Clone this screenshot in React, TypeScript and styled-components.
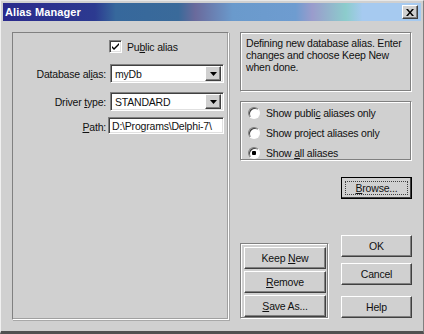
import React from "react";
import styled, { createGlobalStyle } from "styled-components";

const GlobalStyle = createGlobalStyle`
  html, body {
    margin: 0;
    padding: 0;
    background: #d0d0d0;
  }
  body {
    font-family: "Liberation Sans", Arial, sans-serif;
    font-size: 10.5px;
    letter-spacing: -0.2px;
    color: #111;
  }
`;

const raised = `
  border: 1px solid;
  border-color: #ffffff #404040 #404040 #ffffff;
  box-shadow: inset -1px -1px 0 #808080;
`;

const sunken = `
  border: 1px solid;
  border-color: #808080 #ffffff #ffffff #808080;
  box-shadow: inset 1px 1px 0 #404040, inset -1px -1px 0 #e0e0e0;
`;

const Arrow = () => (
  <svg width="7" height="4" viewBox="0 0 7 4">
    <path d="M0 0h7L3.5 4z" fill="#000" />
  </svg>
);

export default function App() {
  return (
    <>
      <GlobalStyle />
      <Window>
        <TitleBar>
          <Title>Alias Manager</Title>
          <CloseButton>
            <svg width="8" height="7" viewBox="0 0 8 7">
              <path d="M0 0h2l2 2.5L6 0h2L5 3.5 8 7H6L4 4.5 2 7H0l3-3.5z" fill="#000" />
            </svg>
          </CloseButton>
        </TitleBar>
        <Body>
          <LeftPanel>
            <CheckRow>
              <CheckBox>
                <svg width="9" height="9" viewBox="0 0 9 9">
                  <path d="M1 4l2 2 5-5v2L3 8 1 6z" fill="#000" />
                </svg>
              </CheckBox>
              <span>
                Pu<u>b</u>lic alias
              </span>
            </CheckRow>
            <FieldGrid>
              <Label>
                Database al<u>i</u>as:
              </Label>
              <Combo>
                <FieldText>myDb</FieldText>
                <DropButton>
                  <Arrow />
                </DropButton>
              </Combo>
              <Label>
                Driver <u>t</u>ype:
              </Label>
              <Combo>
                <FieldText>STANDARD</FieldText>
                <DropButton>
                  <Arrow />
                </DropButton>
              </Combo>
              <Label>
                <u>P</u>ath:
              </Label>
              <Edit>D:\Programs\Delphi-7\</Edit>
            </FieldGrid>
          </LeftPanel>
          <RightColumn>
            <InfoBox>
              Defining new database alias. Enter changes and choose Keep New
              when done.
            </InfoBox>
            <RadioGroup>
              <RadioRow>
                <Radio />
                <span>
                  Show publi<u>c</u> aliases only
                </span>
              </RadioRow>
              <RadioRow>
                <Radio />
                <span>
                  Show pro<u>j</u>ect aliases only
                </span>
              </RadioRow>
              <RadioRow>
                <Radio $checked />
                <span>
                  Show <u>a</u>ll aliases
                </span>
              </RadioRow>
            </RadioGroup>
            <BrowseRow>
              <Button $focused>
                <span>
                  <u>B</u>rowse...
                </span>
              </Button>
            </BrowseRow>
            <BottomRow>
              <ButtonGroup>
                <Button $wide>
                  <span>
                    Keep <u>N</u>ew
                  </span>
                </Button>
                <Button $wide>
                  <span>
                    <u>R</u>emove
                  </span>
                </Button>
                <Button $wide>
                  <span>
                    <u>S</u>ave As...
                  </span>
                </Button>
              </ButtonGroup>
              <DialogButtons>
                <Button>OK</Button>
                <Button>Cancel</Button>
                <Spacer />
                <Button>Help</Button>
              </DialogButtons>
            </BottomRow>
          </RightColumn>
        </Body>
      </Window>
    </>
  );
}

const Window = styled.div`
  width: 424px;
  height: 334px;
  box-sizing: border-box;
  background: #d0d0d0;
  border-left: 1px solid #f0f0f0;
  border-top: 1px solid #e8e8e8;
  border-bottom: 3px solid #505050;
  border-right: 1px solid #808080;
  padding: 2px 2px 0 2px;
  display: flex;
  flex-direction: column;
`;

const TitleBar = styled.div`
  height: 18px;
  display: flex;
  align-items: center;
  justify-content: space-between;
  padding: 0 3px 0 2px;
  background: linear-gradient(
    to right,
    #2a2a8c 0%,
    #2c3a90 22%,
    #36689c 27%,
    #3a6a9a 42%,
    #6a6a9c 46%,
    #6a9acc 55%,
    #6e9cd0 70%,
    #9a9ccc 74%,
    #8ccccc 82%,
    #a6caf0 86%,
    #a6caf0 100%
  );
`;

const Title = styled.span`
  color: #fff;
  font-weight: bold;
  font-size: 11px;
  letter-spacing: 0.1px;
`;

const CloseButton = styled.div`
  width: 14px;
  height: 12px;
  ${raised}
  background: #d0d0d0;
  display: flex;
  align-items: center;
  justify-content: center;
`;

const Body = styled.div`
  flex: 1;
  display: flex;
  gap: 11px;
  padding: 11px 9px 11px 9px;
`;

const LeftPanel = styled.div`
  width: 217px;
  height: 288px;
  box-sizing: border-box;
  border: 1px solid;
  border-color: #808080 #ffffff #ffffff #808080;
  box-shadow: inset -1px -1px 0 #a0a0a0, 1px 1px 0 #a8a8a8;
  padding: 6px 4px 0 0;
  display: flex;
  flex-direction: column;
`;

const CheckRow = styled.div`
  display: flex;
  align-items: center;
  gap: 5px;
  padding-left: 96px;
  height: 15px;
`;

const CheckBox = styled.div`
  width: 13px;
  height: 13px;
  box-sizing: border-box;
  ${sunken}
  background: #fff;
  display: flex;
  align-items: center;
  justify-content: center;
`;

const FieldGrid = styled.div`
  margin-top: 10px;
  display: grid;
  grid-template-columns: 93px 1fr;
  column-gap: 4px;
  row-gap: 9px;
  align-items: center;
`;

const Label = styled.label`
  text-align: right;
  white-space: nowrap;
`;

const Combo = styled.div`
  height: 19px;
  box-sizing: border-box;
  ${sunken}
  background: #fff;
  display: flex;
  align-items: center;
  padding: 2px;
`;

const FieldText = styled.span`
  flex: 1;
  padding-left: 2px;
`;

const DropButton = styled.div`
  width: 16px;
  height: 15px;
  box-sizing: border-box;
  ${raised}
  background: #d0d0d0;
  display: flex;
  align-items: center;
  justify-content: center;
`;

const Edit = styled.div`
  height: 17px;
  box-sizing: border-box;
  ${sunken}
  background: #fff;
  display: flex;
  align-items: center;
  padding-left: 3px;
  margin-left: -2px;
  margin-top: -3px;
  white-space: nowrap;
  overflow: hidden;
`;

const RightColumn = styled.div`
  width: 172px;
  display: flex;
  flex-direction: column;
`;

const GroupFrame = styled.div`
  box-sizing: border-box;
  border: 1px solid;
  border-color: #808080 #ffffff #ffffff #808080;
  box-shadow: inset -1px -1px 0 #808080, inset 1px 1px 0 #ffffff;
`;

const InfoBox = styled(GroupFrame)`
  height: 60px;
  padding: 4px 5px;
  line-height: 12px;
`;

const RadioGroup = styled(GroupFrame)`
  margin-top: 9px;
  height: 60px;
  padding: 4px 0 0 7px;
  display: flex;
  flex-direction: column;
  gap: 7px;
`;

const RadioRow = styled.div`
  display: flex;
  align-items: center;
  gap: 6px;
  height: 13px;
`;

const Radio = styled.div<{ $checked?: boolean }>`
  width: 12px;
  height: 12px;
  box-sizing: border-box;
  border-radius: 50%;
  border: 1px solid;
  border-color: #808080 #ffffff #ffffff #808080;
  box-shadow: inset 1px 1px 0 #404040;
  background: radial-gradient(
    circle,
    ${({ $checked }) => ($checked ? "#000 0 2px, #fff 2.5px" : "#fff 0")}
  );
`;

const BrowseRow = styled.div`
  margin-top: 16px;
  display: flex;
  justify-content: flex-end;
`;

const Button = styled.div<{ $focused?: boolean; $wide?: boolean }>`
  width: ${({ $wide }) => ($wide ? "82px" : "71px")};
  height: 22px;
  box-sizing: border-box;
  ${raised}
  background: #d0d0d0;
  display: flex;
  align-items: center;
  justify-content: center;
  position: relative;
  ${({ $focused }) =>
    $focused &&
    `
    border-color: #fff #000 #000 #fff;
    box-shadow: inset -1px -1px 0 #404040;
    outline: 1px solid #000;
    outline-offset: -1px;
    &::after {
      content: "";
      position: absolute;
      inset: 3px;
      border: 1px dotted #404040;
    }
  `}
`;

const BottomRow = styled.div`
  margin-top: 36px;
  display: flex;
  justify-content: space-between;
  align-items: flex-start;
`;

const ButtonGroup = styled(GroupFrame)`
  margin-top: 8px;
  width: 89px;
  height: 76px;
  padding: 3px 0 0 3px;
  display: flex;
  flex-direction: column;
  gap: 2px;
`;

const DialogButtons = styled.div`
  display: flex;
  flex-direction: column;
  gap: 6px;
`;

const Spacer = styled.div`
  height: 5px;
  margin-top: -6px;
`;
